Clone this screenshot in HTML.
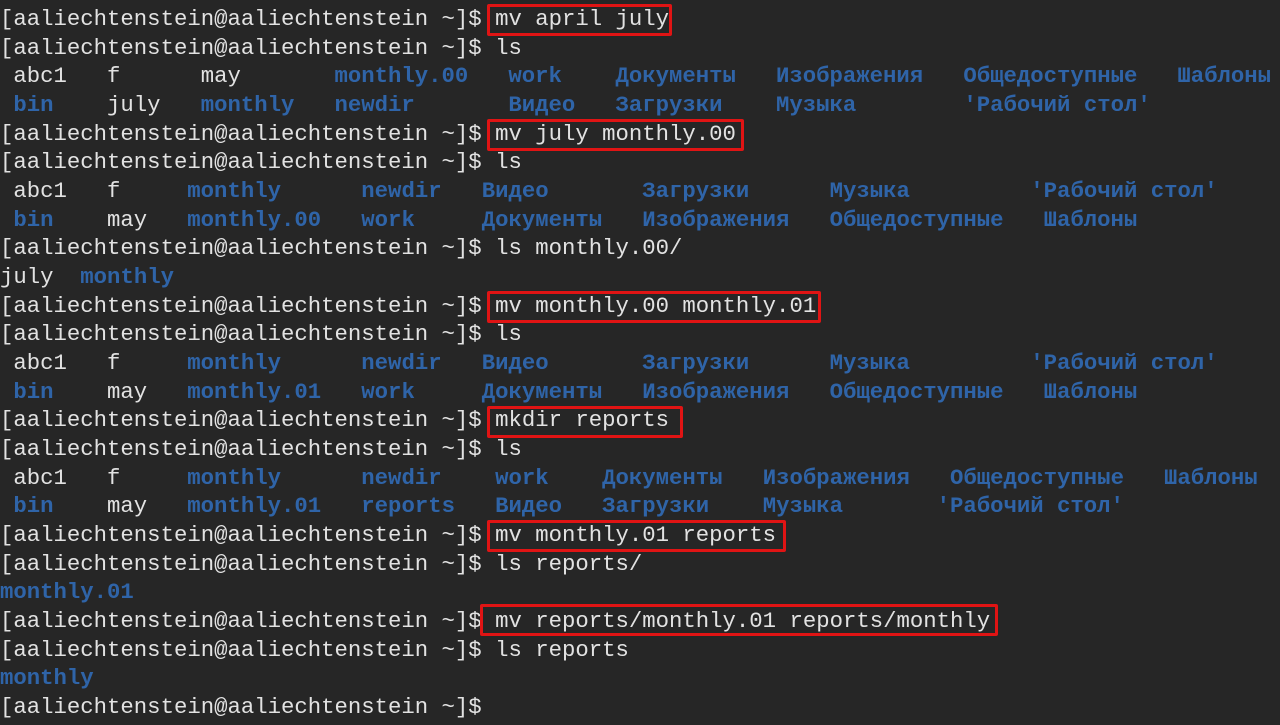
<!DOCTYPE html>
<html><head><meta charset="utf-8"><style>
html,body{margin:0;padding:0;background:#262626;width:1280px;height:725px;overflow:hidden}
.t{position:absolute;left:0;top:0;width:1280px;height:725px;font-family:"Liberation Mono","DejaVu Sans Mono",monospace;font-size:22.3px;color:#e2e2e2}
.l{position:absolute;left:0;height:28.67px;line-height:28.67px;white-space:pre;width:1280px}
.l span{position:absolute;top:0}
.b{color:#2f64a8;font-weight:bold}
.box{position:absolute;border:3px solid #e01414;border-radius:2px;box-sizing:border-box;height:32px}
</style></head><body><div class="t">
<div class="l" style="top:5px">[aaliechtenstein@aaliechtenstein ~]$ mv april july</div>
<div class="l" style="top:33.7px">[aaliechtenstein@aaliechtenstein ~]$ ls</div>
<div class="l" style="top:62.3px"><span style="left:13.4px">abc1</span><span style="left:107px">f</span><span style="left:200.7px">may</span><span class="b" style="left:334.5px">monthly.00</span><span class="b" style="left:508.4px">work</span><span class="b" style="left:615.5px">Документы</span><span class="b" style="left:776px">Изображения</span><span class="b" style="left:963.4px">Общедоступные</span><span class="b" style="left:1177.4px">Шаблоны</span></div>
<div class="l" style="top:91px"><span class="b" style="left:13.4px">bin</span><span style="left:107px">july</span><span class="b" style="left:200.7px">monthly</span><span class="b" style="left:334.5px">newdir</span><span class="b" style="left:508.4px">Видео</span><span class="b" style="left:615.5px">Загрузки</span><span class="b" style="left:776px">Музыка</span><span class="b" style="left:963.4px">'Рабочий стол'</span></div>
<div class="l" style="top:119.7px">[aaliechtenstein@aaliechtenstein ~]$ mv july monthly.00</div>
<div class="l" style="top:148.4px">[aaliechtenstein@aaliechtenstein ~]$ ls</div>
<div class="l" style="top:177px"><span style="left:13.4px">abc1</span><span style="left:107px">f</span><span class="b" style="left:187.3px">monthly</span><span class="b" style="left:361.3px">newdir</span><span class="b" style="left:481.7px">Видео</span><span class="b" style="left:642.2px">Загрузки</span><span class="b" style="left:829.6px">Музыка</span><span class="b" style="left:1030.3px">'Рабочий стол'</span></div>
<div class="l" style="top:205.7px"><span class="b" style="left:13.4px">bin</span><span style="left:107px">may</span><span class="b" style="left:187.3px">monthly.00</span><span class="b" style="left:361.3px">work</span><span class="b" style="left:481.7px">Документы</span><span class="b" style="left:642.2px">Изображения</span><span class="b" style="left:829.6px">Общедоступные</span><span class="b" style="left:1043.6px">Шаблоны</span></div>
<div class="l" style="top:234.4px">[aaliechtenstein@aaliechtenstein ~]$ ls monthly.00/</div>
<div class="l" style="top:263px"><span style="left:0">july</span><span class="b" style="left:80.3px">monthly</span></div>
<div class="l" style="top:291.7px">[aaliechtenstein@aaliechtenstein ~]$ mv monthly.00 monthly.01</div>
<div class="l" style="top:320.4px">[aaliechtenstein@aaliechtenstein ~]$ ls</div>
<div class="l" style="top:349px"><span style="left:13.4px">abc1</span><span style="left:107px">f</span><span class="b" style="left:187.3px">monthly</span><span class="b" style="left:361.3px">newdir</span><span class="b" style="left:481.7px">Видео</span><span class="b" style="left:642.2px">Загрузки</span><span class="b" style="left:829.6px">Музыка</span><span class="b" style="left:1030.3px">'Рабочий стол'</span></div>
<div class="l" style="top:377.7px"><span class="b" style="left:13.4px">bin</span><span style="left:107px">may</span><span class="b" style="left:187.3px">monthly.01</span><span class="b" style="left:361.3px">work</span><span class="b" style="left:481.7px">Документы</span><span class="b" style="left:642.2px">Изображения</span><span class="b" style="left:829.6px">Общедоступные</span><span class="b" style="left:1043.6px">Шаблоны</span></div>
<div class="l" style="top:406.4px">[aaliechtenstein@aaliechtenstein ~]$ mkdir reports</div>
<div class="l" style="top:435px">[aaliechtenstein@aaliechtenstein ~]$ ls</div>
<div class="l" style="top:463.7px"><span style="left:13.4px">abc1</span><span style="left:107px">f</span><span class="b" style="left:187.3px">monthly</span><span class="b" style="left:361.3px">newdir</span><span class="b" style="left:495.1px">work</span><span class="b" style="left:602.1px">Документы</span><span class="b" style="left:762.7px">Изображения</span><span class="b" style="left:950px">Общедоступные</span><span class="b" style="left:1164px">Шаблоны</span></div>
<div class="l" style="top:492.4px"><span class="b" style="left:13.4px">bin</span><span style="left:107px">may</span><span class="b" style="left:187.3px">monthly.01</span><span class="b" style="left:361.3px">reports</span><span class="b" style="left:495.1px">Видео</span><span class="b" style="left:602.1px">Загрузки</span><span class="b" style="left:762.7px">Музыка</span><span class="b" style="left:936.6px">'Рабочий стол'</span></div>
<div class="l" style="top:521px">[aaliechtenstein@aaliechtenstein ~]$ mv monthly.01 reports</div>
<div class="l" style="top:549.7px">[aaliechtenstein@aaliechtenstein ~]$ ls reports/</div>
<div class="l" style="top:578.4px"><span class="b" style="left:0">monthly.01</span></div>
<div class="l" style="top:607px">[aaliechtenstein@aaliechtenstein ~]$ mv reports/monthly.01 reports/monthly</div>
<div class="l" style="top:635.7px">[aaliechtenstein@aaliechtenstein ~]$ ls reports</div>
<div class="l" style="top:664.4px"><span class="b" style="left:0">monthly</span></div>
<div class="l" style="top:693px">[aaliechtenstein@aaliechtenstein ~]$</div>

<div class="box" style="left:487px;top:4px;width:185px"></div>
<div class="box" style="left:487px;top:119px;width:257px"></div>
<div class="box" style="left:487px;top:291px;width:334px"></div>
<div class="box" style="left:487px;top:406px;width:196px"></div>
<div class="box" style="left:487px;top:520px;width:299px"></div>
<div class="box" style="left:480px;top:604px;width:518px"></div>
</div></body></html>
